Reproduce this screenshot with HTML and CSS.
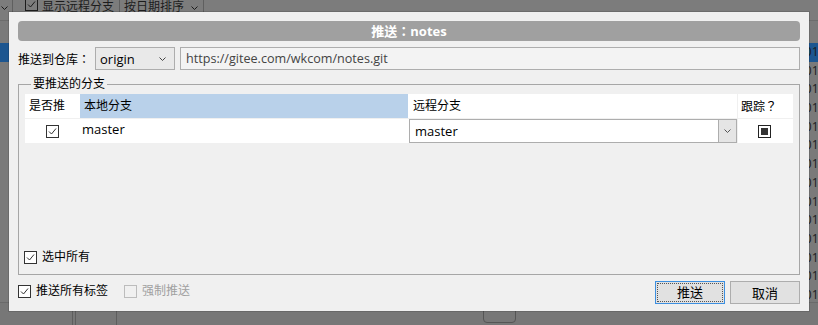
FILE: index.html
```html
<!DOCTYPE html>
<html lang="zh-CN">
<head>
  <meta charset="UTF-8">
  <meta name="viewport" content="width=device-width, initial-scale=1.0">
  <title>推送：notes</title>
  <link rel="stylesheet" href="styles.css">
</head>
<body>
  <div class="app">
    <div class="toolbar">
      <span class="tb-item tb-drop"><svg width="7" height="4" viewBox="0 0 7 4"><polyline points="0.5,0.5 3.5,3.5 6.5,0.5" fill="none" stroke="#1c1c1c"/></svg></span>
      <span class="tb-item tb-check"><span class="cbx cbx-dim"><svg width="11" height="11" viewBox="0 0 11 11"><polyline points="2,5.5 4.5,8 9,2.5" fill="none" stroke="#1c1c1c"/></svg></span>显示远程分支</span>
      <span class="tb-item">按日期排序<svg class="tb-chev" width="7" height="4" viewBox="0 0 7 4"><polyline points="0.5,0.5 3.5,3.5 6.5,0.5" fill="none" stroke="#1c1c1c"/></svg></span>
      <span class="tb-item tb-rest"></span>
    </div>
    <div class="commits">
      <div class="commit-head"></div>
      <div class="commit selected"><span class="msg">Merge branch 'master'</span><span class="date">2019-06-03 21:14</span></div>
      <div class="commit"><span class="msg">Add notes</span><span class="date">2019-06-01 10:22</span></div>
      <div class="commit"><span class="msg">Update notes</span><span class="date">2019-05-30 18:05</span></div>
      <div class="commit"><span class="msg">Update notes</span><span class="date">2019-05-28 09:41</span></div>
      <div class="commit"><span class="msg">Update notes</span><span class="date">2019-05-26 22:17</span></div>
      <div class="commit"><span class="msg">Update notes</span><span class="date">2019-05-24 13:56</span></div>
      <div class="commit"><span class="msg">Update notes</span><span class="date">2019-05-21 08:30</span></div>
      <div class="commit"><span class="msg">Update notes</span><span class="date">2019-05-19 16:48</span></div>
      <div class="commit"><span class="msg">Update notes</span><span class="date">2019-05-17 11:02</span></div>
      <div class="commit"><span class="msg">Update notes</span><span class="date">2019-05-15 20:39</span></div>
      <div class="commit"><span class="msg">Update notes</span><span class="date">2019-05-12 07:25</span></div>
      <div class="commit"><span class="msg">Update notes</span><span class="date">2019-05-10 14:11</span></div>
      <div class="commit"><span class="msg">Update notes</span><span class="date">2019-05-08 19:53</span></div>
      <div class="commit"><span class="msg">Update notes</span><span class="date">2019-05-06 10:08</span></div>
      <div class="commit"><span class="msg">Update note/README.md</span><span class="date">2019-05-03 17:44</span></div>
    </div>
    <div class="statusbar">
      <span class="sb-cell sb-a"></span>
      <span class="sb-cell sb-b"></span>
      <span class="sb-tab"></span>
    </div>
  </div>

  <div class="dialog">
    <div class="title">推送<span class="punct" lang="zh-TW">：</span>notes</div>

    <div class="remote-row">
      <span class="remote-label">推送到仓库<span class="punct" lang="zh-TW">：</span></span>
      <div class="select">
        <span>origin</span>
        <svg width="7" height="4" viewBox="0 0 7 4"><polyline points="0.5,0.5 3.5,3.5 6.5,0.5" fill="none" stroke="#444"/></svg>
      </div>
      <div class="url">https://gitee.com/wkcom/notes.git</div>
    </div>

    <fieldset class="group">
      <legend>要推送的分支</legend>
      <div class="group-body">
        <div class="branches">
          <div class="th">是否推</div>
          <div class="th th-active">本地分支</div>
          <div class="th th-remote">远程分支</div>
          <div class="th th-track">跟踪<span class="punct" lang="zh-TW">？</span></div>

          <div class="td td-center">
            <span class="cbx"><svg width="11" height="11" viewBox="0 0 11 11"><polyline points="2,5.5 4.5,8 9,2.5" fill="none" stroke="#333"/></svg></span>
          </div>
          <div class="td td-local">master</div>
          <div class="td td-combo">
            <div class="combo">
              <span class="combo-text">master</span>
              <span class="combo-btn"><svg width="7" height="4" viewBox="0 0 7 4"><polyline points="0.5,0.5 3.5,3.5 6.5,0.5" fill="none" stroke="#555"/></svg></span>
            </div>
          </div>
          <div class="td td-center td-track">
            <span class="cbx cbx-mixed"><span class="mixed-fill"></span></span>
          </div>
        </div>

        <label class="check-line select-all"><span class="cbx"><svg width="11" height="11" viewBox="0 0 11 11"><polyline points="2,5.5 4.5,8 9,2.5" fill="none" stroke="#333"/></svg></span><span>选中所有</span></label>
      </div>
    </fieldset>

    <div class="footer">
      <label class="check-line"><span class="cbx"><svg width="11" height="11" viewBox="0 0 11 11"><polyline points="2,5.5 4.5,8 9,2.5" fill="none" stroke="#333"/></svg></span><span>推送所有标签</span></label>
      <label class="check-line disabled"><span class="cbx"></span><span>强制推送</span></label>
      <div class="buttons">
        <button class="btn btn-default"><span class="focus-ring">推送</span></button>
        <button class="btn">取消</button>
      </div>
    </div>
  </div>
</body>
</html>
```

FILE: styles.css
```css
body {
  margin: 0;
  width: 818px;
  height: 325px;
  overflow: hidden;
  position: relative;
  font-family: 'Open Sans', 'Noto Sans CJK SC', sans-serif;
  font-size: 12px;
  color: #000;
  background: #7a7a7a;
}
.punct {
  font-family: 'Noto Sans CJK TC', sans-serif;
}

/* dimmed main window behind the dialog */
.app {
  height: 325px;
  display: flex;
  flex-direction: column;
  color: #1c1c1c;
}
.toolbar {
  height: 20px;
  flex: none;
  display: flex;
  border-bottom: 1px solid #6c6c6c;
  background: #7c7c7c;
}
.tb-item {
  display: flex;
  align-items: flex-start;
  line-height: 14px;
  padding: 0 5px 0 4px;
  border-right: 1px solid #5f5f5f;
  white-space: nowrap;
}
.tb-drop {
  width: 7px;
  padding: 6px 4px 0 1px;
}
.tb-check {
  padding-left: 12px;
  gap: 4px;
}
.tb-check .cbx {
  margin-top: -2px;
}
.tb-chev {
  margin: 6px 0 0 7px;
}
.tb-rest {
  flex: 1;
  border-right: none;
}
.commits {
  flex: 1;
  overflow: hidden;
}
.commit-head {
  height: 22px;
}
.commit {
  height: 18.7px;
  line-height: 18.7px;
  display: grid;
  grid-template-columns: 798px 1fr;
  white-space: nowrap;
}
.commit .msg {
  padding-left: 24px;
}
.commit.selected {
  background: #1d5690;
}
.statusbar {
  height: 22px;
  flex: none;
  display: flex;
  border-top: 1px solid #6a6a6a;
  background: #777;
  position: relative;
}
.sb-cell {
  height: 100%;
  border-right: 1px solid #5e5e5e;
}
.sb-a {
  width: 72px;
}
.sb-b {
  width: 40px;
  margin-left: 2px;
  border-left: 1px solid #5e5e5e;
}
.sb-tab {
  position: absolute;
  left: 483px;
  top: -2px;
  width: 31px;
  height: 20px;
  border: 1px solid #555;
  border-radius: 4px;
}

/* dialog */
.dialog {
  position: absolute;
  left: 9px;
  top: 12px;
  width: 800px;
  height: 299px;
  box-sizing: border-box;
  padding: 9px 9px 7px;
  background: #f0f0f0;
  display: flex;
  flex-direction: column;
  box-shadow: 0 0 0 1px rgba(0, 0, 0, 0.12);
}
.title {
  height: 20px;
  line-height: 20px;
  border-radius: 4px;
  background: #a0a0a0;
  color: #fff;
  font-weight: bold;
  font-size: 13px;
  text-align: center;
}
.remote-row {
  margin-top: 6px;
  height: 23px;
  display: flex;
  align-items: center;
}
.remote-label {
  width: 77px;
}
.select {
  width: 80px;
  height: 23px;
  box-sizing: border-box;
  border: 1px solid #adadad;
  background: #e9e9e9;
  display: flex;
  align-items: center;
  justify-content: space-between;
  padding: 0 8px 0 4px;
  font-size: 13px;
}
.url {
  flex: 1;
  height: 23px;
  margin-left: 5px;
  box-sizing: border-box;
  border: 1px solid #adadad;
  background: #f3f3f3;
  color: #444;
  line-height: 21px;
  padding-left: 5px;
  font-size: 12.6px;
}

.group {
  margin: 6px 0 0;
  padding: 0 6px 9px;
  border: 1px solid #a6a6a6;
  min-width: 0;
}
.group legend {
  margin-left: 6px;
  padding: 0 2px;
  line-height: 16px;
}
.group-body {
  height: 171px;
  padding-top: 2px;
  display: flex;
  flex-direction: column;
}
.branches {
  display: grid;
  grid-template-columns: 55px 328px 329px 56px;
  grid-template-rows: 24px 25px;
  background: #fff;
}
.th {
  line-height: 24px;
  padding-left: 4px;
  white-space: nowrap;
}
.th-active {
  background: #b9d1ea;
}
.th-remote {
  padding-left: 5px;
}
.th-track,
.td-track {
  border-left: 1px solid #f0f0f0;
  padding-left: 3px;
}
.td {
  border-top: 1px solid #f0f0f0;
}
.td-center {
  display: flex;
  align-items: center;
  justify-content: center;
}
.td-track {
  padding-left: 0;
  padding-right: 3px;
}
.td-local {
  padding: 2px 0 0 2px;
  line-height: 16px;
  font-size: 13px;
}
.td-combo {
  padding-left: 1px;
}
.combo {
  height: 24px;
  box-sizing: border-box;
  border: 1px solid #adadad;
  background: #fff;
  display: flex;
  font-size: 13px;
}
.combo-text {
  flex: 1;
  line-height: 22px;
  padding-left: 5px;
}
.combo-btn {
  width: 17px;
  background: #e5e5e5;
  border-left: 1px solid #adadad;
  display: flex;
  align-items: center;
  justify-content: center;
}

.cbx {
  width: 13px;
  height: 13px;
  box-sizing: border-box;
  border: 1px solid #333;
  background: #fff;
  display: inline-flex;
  align-items: center;
  justify-content: center;
  flex: none;
}
.cbx-dim {
  border-color: #1c1c1c;
  background: transparent;
}
.cbx-mixed {
  border-color: #222;
}
.mixed-fill {
  width: 7px;
  height: 7px;
  background: #333;
}

.check-line {
  display: flex;
  align-items: center;
  gap: 5px;
  line-height: 16px;
}
.select-all {
  margin: auto 0 0 -1px;
}
.check-line.disabled {
  color: #a0a0a0;
  margin-left: 16px;
}
.check-line.disabled .cbx {
  border-color: #bcbcbc;
  background: #f0f0f0;
}

.footer {
  margin-top: 6px;
  height: 23px;
  display: flex;
  align-items: flex-start;
}
.footer .check-line {
  margin-top: 2px;
}
.buttons {
  margin-left: auto;
  display: flex;
  gap: 5px;
}
.btn {
  width: 70px;
  height: 23px;
  box-sizing: border-box;
  border: 1px solid #adadad;
  background: #e1e1e1;
  font-family: inherit;
  font-size: 13px;
  color: #000;
  padding: 0;
}
.btn-default {
  border-color: #3c8fe0;
  padding: 1px;
}
.focus-ring {
  display: block;
  height: 100%;
  box-sizing: border-box;
  border: 1px dotted #555;
  line-height: 17px;
}
```
